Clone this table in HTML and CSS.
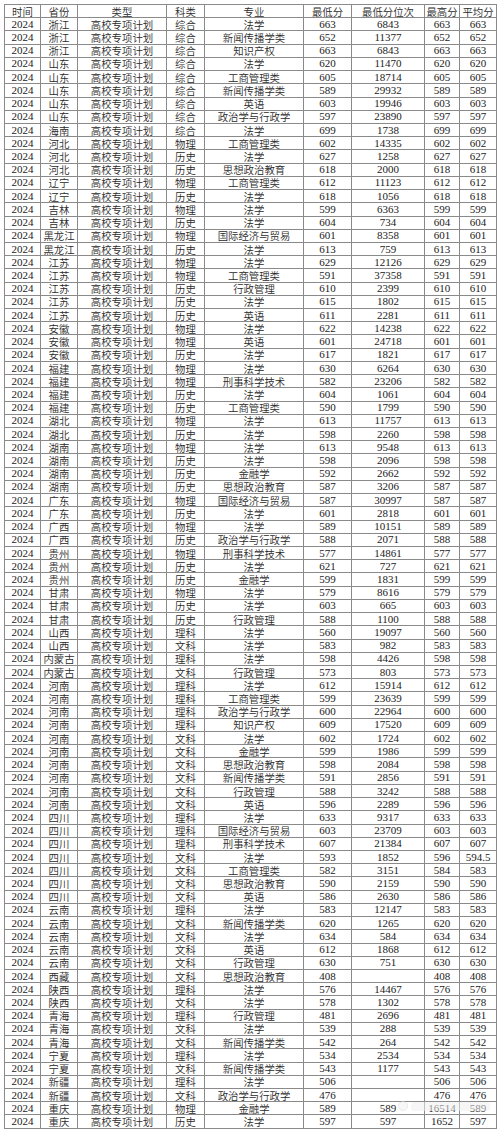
FILE: index.html
```html
<!DOCTYPE html>
<html lang="zh-CN">
<head>
<meta charset="utf-8">
<title>2024 高校专项计划</title>
<link rel="stylesheet" href="styles.css">
</head>
<body>
<div class="page">
<table class="scores">
<colgroup>
<col class="c-year"><col class="c-prov"><col class="c-type"><col class="c-subj"><col class="c-major"><col class="c-min"><col class="c-rank"><col class="c-max"><col class="c-avg">
</colgroup>
<thead>
<tr><th>时间</th><th>省份</th><th>类型</th><th>科类</th><th>专业</th><th>最低分</th><th>最低分位次</th><th>最高分</th><th>平均分</th></tr>
</thead>
<tbody>
<tr><td>2024</td><td>浙江</td><td>高校专项计划</td><td>综合</td><td>法学</td><td>663</td><td>6843</td><td>663</td><td>663</td></tr>
<tr><td>2024</td><td>浙江</td><td>高校专项计划</td><td>综合</td><td>新闻传播学类</td><td>652</td><td>11377</td><td>652</td><td>652</td></tr>
<tr><td>2024</td><td>浙江</td><td>高校专项计划</td><td>综合</td><td>知识产权</td><td>663</td><td>6843</td><td>663</td><td>663</td></tr>
<tr><td>2024</td><td>山东</td><td>高校专项计划</td><td>综合</td><td>法学</td><td>620</td><td>11470</td><td>620</td><td>620</td></tr>
<tr><td>2024</td><td>山东</td><td>高校专项计划</td><td>综合</td><td>工商管理类</td><td>605</td><td>18714</td><td>605</td><td>605</td></tr>
<tr><td>2024</td><td>山东</td><td>高校专项计划</td><td>综合</td><td>新闻传播学类</td><td>589</td><td>29932</td><td>589</td><td>589</td></tr>
<tr><td>2024</td><td>山东</td><td>高校专项计划</td><td>综合</td><td>英语</td><td>603</td><td>19946</td><td>603</td><td>603</td></tr>
<tr><td>2024</td><td>山东</td><td>高校专项计划</td><td>综合</td><td>政治学与行政学</td><td>597</td><td>23890</td><td>597</td><td>597</td></tr>
<tr><td>2024</td><td>海南</td><td>高校专项计划</td><td>综合</td><td>法学</td><td>699</td><td>1738</td><td>699</td><td>699</td></tr>
<tr><td>2024</td><td>河北</td><td>高校专项计划</td><td>物理</td><td>工商管理类</td><td>602</td><td>14335</td><td>602</td><td>602</td></tr>
<tr><td>2024</td><td>河北</td><td>高校专项计划</td><td>历史</td><td>法学</td><td>627</td><td>1258</td><td>627</td><td>627</td></tr>
<tr><td>2024</td><td>河北</td><td>高校专项计划</td><td>历史</td><td>思想政治教育</td><td>618</td><td>2000</td><td>618</td><td>618</td></tr>
<tr><td>2024</td><td>辽宁</td><td>高校专项计划</td><td>物理</td><td>工商管理类</td><td>612</td><td>11123</td><td>612</td><td>612</td></tr>
<tr><td>2024</td><td>辽宁</td><td>高校专项计划</td><td>历史</td><td>法学</td><td>618</td><td>1056</td><td>618</td><td>618</td></tr>
<tr><td>2024</td><td>吉林</td><td>高校专项计划</td><td>物理</td><td>法学</td><td>599</td><td>6363</td><td>599</td><td>599</td></tr>
<tr><td>2024</td><td>吉林</td><td>高校专项计划</td><td>历史</td><td>法学</td><td>604</td><td>734</td><td>604</td><td>604</td></tr>
<tr><td>2024</td><td>黑龙江</td><td>高校专项计划</td><td>物理</td><td>国际经济与贸易</td><td>601</td><td>8358</td><td>601</td><td>601</td></tr>
<tr><td>2024</td><td>黑龙江</td><td>高校专项计划</td><td>历史</td><td>法学</td><td>613</td><td>759</td><td>613</td><td>613</td></tr>
<tr><td>2024</td><td>江苏</td><td>高校专项计划</td><td>物理</td><td>法学</td><td>629</td><td>12126</td><td>629</td><td>629</td></tr>
<tr><td>2024</td><td>江苏</td><td>高校专项计划</td><td>物理</td><td>工商管理类</td><td>591</td><td>37358</td><td>591</td><td>591</td></tr>
<tr><td>2024</td><td>江苏</td><td>高校专项计划</td><td>历史</td><td>行政管理</td><td>610</td><td>2399</td><td>610</td><td>610</td></tr>
<tr><td>2024</td><td>江苏</td><td>高校专项计划</td><td>历史</td><td>法学</td><td>615</td><td>1802</td><td>615</td><td>615</td></tr>
<tr><td>2024</td><td>江苏</td><td>高校专项计划</td><td>历史</td><td>英语</td><td>611</td><td>2281</td><td>611</td><td>611</td></tr>
<tr><td>2024</td><td>安徽</td><td>高校专项计划</td><td>物理</td><td>法学</td><td>622</td><td>14238</td><td>622</td><td>622</td></tr>
<tr><td>2024</td><td>安徽</td><td>高校专项计划</td><td>物理</td><td>英语</td><td>601</td><td>24718</td><td>601</td><td>601</td></tr>
<tr><td>2024</td><td>安徽</td><td>高校专项计划</td><td>历史</td><td>法学</td><td>617</td><td>1821</td><td>617</td><td>617</td></tr>
<tr><td>2024</td><td>福建</td><td>高校专项计划</td><td>物理</td><td>法学</td><td>630</td><td>6264</td><td>630</td><td>630</td></tr>
<tr><td>2024</td><td>福建</td><td>高校专项计划</td><td>物理</td><td>刑事科学技术</td><td>582</td><td>23206</td><td>582</td><td>582</td></tr>
<tr><td>2024</td><td>福建</td><td>高校专项计划</td><td>历史</td><td>法学</td><td>604</td><td>1061</td><td>604</td><td>604</td></tr>
<tr><td>2024</td><td>福建</td><td>高校专项计划</td><td>历史</td><td>工商管理类</td><td>590</td><td>1799</td><td>590</td><td>590</td></tr>
<tr><td>2024</td><td>湖北</td><td>高校专项计划</td><td>物理</td><td>法学</td><td>613</td><td>11757</td><td>613</td><td>613</td></tr>
<tr><td>2024</td><td>湖北</td><td>高校专项计划</td><td>历史</td><td>法学</td><td>598</td><td>2260</td><td>598</td><td>598</td></tr>
<tr><td>2024</td><td>湖南</td><td>高校专项计划</td><td>物理</td><td>法学</td><td>613</td><td>9548</td><td>613</td><td>613</td></tr>
<tr><td>2024</td><td>湖南</td><td>高校专项计划</td><td>历史</td><td>法学</td><td>598</td><td>2096</td><td>598</td><td>598</td></tr>
<tr><td>2024</td><td>湖南</td><td>高校专项计划</td><td>历史</td><td>金融学</td><td>592</td><td>2662</td><td>592</td><td>592</td></tr>
<tr><td>2024</td><td>湖南</td><td>高校专项计划</td><td>历史</td><td>思想政治教育</td><td>587</td><td>3206</td><td>587</td><td>587</td></tr>
<tr><td>2024</td><td>广东</td><td>高校专项计划</td><td>物理</td><td>国际经济与贸易</td><td>587</td><td>30997</td><td>587</td><td>587</td></tr>
<tr><td>2024</td><td>广东</td><td>高校专项计划</td><td>历史</td><td>法学</td><td>601</td><td>2818</td><td>601</td><td>601</td></tr>
<tr><td>2024</td><td>广西</td><td>高校专项计划</td><td>物理</td><td>法学</td><td>589</td><td>10151</td><td>589</td><td>589</td></tr>
<tr><td>2024</td><td>广西</td><td>高校专项计划</td><td>历史</td><td>政治学与行政学</td><td>588</td><td>2071</td><td>588</td><td>588</td></tr>
<tr><td>2024</td><td>贵州</td><td>高校专项计划</td><td>物理</td><td>刑事科学技术</td><td>577</td><td>14861</td><td>577</td><td>577</td></tr>
<tr><td>2024</td><td>贵州</td><td>高校专项计划</td><td>历史</td><td>法学</td><td>621</td><td>727</td><td>621</td><td>621</td></tr>
<tr><td>2024</td><td>贵州</td><td>高校专项计划</td><td>历史</td><td>金融学</td><td>599</td><td>1831</td><td>599</td><td>599</td></tr>
<tr><td>2024</td><td>甘肃</td><td>高校专项计划</td><td>物理</td><td>法学</td><td>579</td><td>8616</td><td>579</td><td>579</td></tr>
<tr><td>2024</td><td>甘肃</td><td>高校专项计划</td><td>历史</td><td>法学</td><td>603</td><td>665</td><td>603</td><td>603</td></tr>
<tr><td>2024</td><td>甘肃</td><td>高校专项计划</td><td>历史</td><td>行政管理</td><td>588</td><td>1100</td><td>588</td><td>588</td></tr>
<tr><td>2024</td><td>山西</td><td>高校专项计划</td><td>理科</td><td>法学</td><td>560</td><td>19097</td><td>560</td><td>560</td></tr>
<tr><td>2024</td><td>山西</td><td>高校专项计划</td><td>文科</td><td>法学</td><td>583</td><td>982</td><td>583</td><td>583</td></tr>
<tr><td>2024</td><td>内蒙古</td><td>高校专项计划</td><td>理科</td><td>法学</td><td>598</td><td>4426</td><td>598</td><td>598</td></tr>
<tr><td>2024</td><td>内蒙古</td><td>高校专项计划</td><td>文科</td><td>行政管理</td><td>573</td><td>803</td><td>573</td><td>573</td></tr>
<tr><td>2024</td><td>河南</td><td>高校专项计划</td><td>理科</td><td>法学</td><td>612</td><td>15914</td><td>612</td><td>612</td></tr>
<tr><td>2024</td><td>河南</td><td>高校专项计划</td><td>理科</td><td>工商管理类</td><td>599</td><td>23639</td><td>599</td><td>599</td></tr>
<tr><td>2024</td><td>河南</td><td>高校专项计划</td><td>理科</td><td>政治学与行政学</td><td>600</td><td>22964</td><td>600</td><td>600</td></tr>
<tr><td>2024</td><td>河南</td><td>高校专项计划</td><td>理科</td><td>知识产权</td><td>609</td><td>17520</td><td>609</td><td>609</td></tr>
<tr><td>2024</td><td>河南</td><td>高校专项计划</td><td>文科</td><td>法学</td><td>602</td><td>1724</td><td>602</td><td>602</td></tr>
<tr><td>2024</td><td>河南</td><td>高校专项计划</td><td>文科</td><td>金融学</td><td>599</td><td>1986</td><td>599</td><td>599</td></tr>
<tr><td>2024</td><td>河南</td><td>高校专项计划</td><td>文科</td><td>思想政治教育</td><td>598</td><td>2084</td><td>598</td><td>598</td></tr>
<tr><td>2024</td><td>河南</td><td>高校专项计划</td><td>文科</td><td>新闻传播学类</td><td>591</td><td>2856</td><td>591</td><td>591</td></tr>
<tr><td>2024</td><td>河南</td><td>高校专项计划</td><td>文科</td><td>行政管理</td><td>588</td><td>3242</td><td>588</td><td>588</td></tr>
<tr><td>2024</td><td>河南</td><td>高校专项计划</td><td>文科</td><td>英语</td><td>596</td><td>2289</td><td>596</td><td>596</td></tr>
<tr><td>2024</td><td>四川</td><td>高校专项计划</td><td>理科</td><td>法学</td><td>633</td><td>9317</td><td>633</td><td>633</td></tr>
<tr><td>2024</td><td>四川</td><td>高校专项计划</td><td>理科</td><td>国际经济与贸易</td><td>603</td><td>23709</td><td>603</td><td>603</td></tr>
<tr><td>2024</td><td>四川</td><td>高校专项计划</td><td>理科</td><td>刑事科学技术</td><td>607</td><td>21384</td><td>607</td><td>607</td></tr>
<tr><td>2024</td><td>四川</td><td>高校专项计划</td><td>文科</td><td>法学</td><td>593</td><td>1852</td><td>596</td><td>594.5</td></tr>
<tr><td>2024</td><td>四川</td><td>高校专项计划</td><td>文科</td><td>工商管理类</td><td>582</td><td>3151</td><td>584</td><td>583</td></tr>
<tr><td>2024</td><td>四川</td><td>高校专项计划</td><td>文科</td><td>思想政治教育</td><td>590</td><td>2159</td><td>590</td><td>590</td></tr>
<tr><td>2024</td><td>四川</td><td>高校专项计划</td><td>文科</td><td>英语</td><td>586</td><td>2630</td><td>586</td><td>586</td></tr>
<tr><td>2024</td><td>云南</td><td>高校专项计划</td><td>理科</td><td>法学</td><td>583</td><td>12147</td><td>583</td><td>583</td></tr>
<tr><td>2024</td><td>云南</td><td>高校专项计划</td><td>文科</td><td>新闻传播学类</td><td>620</td><td>1265</td><td>620</td><td>620</td></tr>
<tr><td>2024</td><td>云南</td><td>高校专项计划</td><td>文科</td><td>法学</td><td>634</td><td>584</td><td>634</td><td>634</td></tr>
<tr><td>2024</td><td>云南</td><td>高校专项计划</td><td>文科</td><td>英语</td><td>612</td><td>1868</td><td>612</td><td>612</td></tr>
<tr><td>2024</td><td>云南</td><td>高校专项计划</td><td>文科</td><td>行政管理</td><td>630</td><td>751</td><td>630</td><td>630</td></tr>
<tr><td>2024</td><td>西藏</td><td>高校专项计划</td><td>文科</td><td>思想政治教育</td><td>408</td><td></td><td>408</td><td>408</td></tr>
<tr><td>2024</td><td>陕西</td><td>高校专项计划</td><td>理科</td><td>法学</td><td>576</td><td>14467</td><td>576</td><td>576</td></tr>
<tr><td>2024</td><td>陕西</td><td>高校专项计划</td><td>文科</td><td>法学</td><td>578</td><td>1302</td><td>578</td><td>578</td></tr>
<tr><td>2024</td><td>青海</td><td>高校专项计划</td><td>理科</td><td>行政管理</td><td>481</td><td>2696</td><td>481</td><td>481</td></tr>
<tr><td>2024</td><td>青海</td><td>高校专项计划</td><td>文科</td><td>法学</td><td>539</td><td>288</td><td>539</td><td>539</td></tr>
<tr><td>2024</td><td>青海</td><td>高校专项计划</td><td>文科</td><td>新闻传播学类</td><td>542</td><td>264</td><td>542</td><td>542</td></tr>
<tr><td>2024</td><td>宁夏</td><td>高校专项计划</td><td>理科</td><td>法学</td><td>534</td><td>2534</td><td>534</td><td>534</td></tr>
<tr><td>2024</td><td>宁夏</td><td>高校专项计划</td><td>文科</td><td>新闻传播学类</td><td>543</td><td>1177</td><td>543</td><td>543</td></tr>
<tr><td>2024</td><td>新疆</td><td>高校专项计划</td><td>理科</td><td>法学</td><td>506</td><td></td><td>506</td><td>506</td></tr>
<tr><td>2024</td><td>新疆</td><td>高校专项计划</td><td>文科</td><td>政治学与行政学</td><td>476</td><td></td><td>476</td><td>476</td></tr>
<tr><td>2024</td><td>重庆</td><td>高校专项计划</td><td>物理</td><td>金融学</td><td>589</td><td>589</td><td>16514</td><td>589</td></tr>
<tr><td>2024</td><td>重庆</td><td>高校专项计划</td><td>历史</td><td>法学</td><td>597</td><td>597</td><td>1652</td><td>597</td></tr>
</tbody>
</table>
<div class="watermark" aria-hidden="true"><span class="wm-dot"></span><span class="wm-bar"></span></div>
</div>
</body>
</html>
```

FILE: styles.css
```css
html, body {
  margin: 0;
  padding: 0;
  background: #ffffff;
}

.page {
  position: relative;
  width: 500px;
  padding: 4px 4px 0 4px;
  box-sizing: border-box;
}

.scores {
  border-collapse: collapse;
  table-layout: fixed;
  width: 492px;
  font-family: "Liberation Serif", "Noto Sans CJK SC", serif;
  font-size: 11px;
  color: #222222;
}

.c-year { width: 36px; }
.c-prov { width: 37px; }
.c-type { width: 89px; }
.c-subj { width: 38px; }
.c-major { width: 99px; }
.c-min { width: 48px; }
.c-rank { width: 73px; }
.c-max { width: 35px; }
.c-avg { width: 37px; }

.scores tr {
  height: 13.23px;
}

.scores th,
.scores td {
  border: 1px solid #8a8a8a;
  padding: 0;
  height: 12.23px;
  line-height: 11px;
  text-align: center;
  vertical-align: middle;
  white-space: nowrap;
  overflow: hidden;
  font-weight: normal;
}

.scores td:nth-child(2),
.scores td:nth-child(3),
.scores td:nth-child(4),
.scores td:nth-child(5),
.scores th {
  font-size: 10.4px;
  font-family: "Noto Sans CJK SC", "Liberation Serif", sans-serif;
  font-weight: 350;
  color: #2a2a2a;
}

.watermark {
  position: absolute;
  left: 398px;
  top: 1100px;
  width: 92px;
  height: 12px;
  display: flex;
  align-items: center;
  gap: 3px;
  opacity: 0.55;
}

.wm-dot {
  width: 10px;
  height: 10px;
  border-radius: 50%;
  background: #f2f2f2;
  border: 1px solid #d8d8d8;
  box-sizing: border-box;
}

.wm-bar {
  flex: 1;
  height: 9px;
  border-radius: 3px;
  background: #efefef;
}
```
